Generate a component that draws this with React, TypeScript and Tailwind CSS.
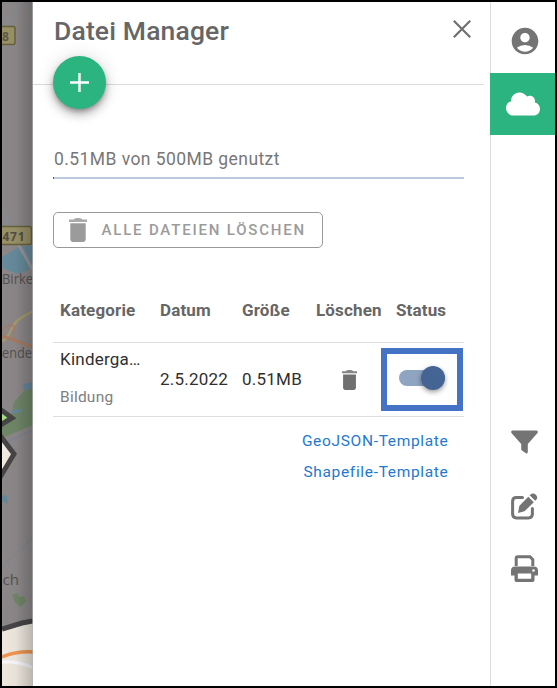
import React from "react";
import { MdAccountCircle } from "react-icons/md";

function MapStrip() {
  return (
    <svg className="block h-[684px] w-[31px] shrink-0" viewBox="2 2 31 684" fontFamily="Open Sans, sans-serif">
      <defs>
        <linearGradient id="edge" x1="0" x2="1" y1="0" y2="0">
          <stop offset="0" stopColor="#000" stopOpacity="0" />
          <stop offset="0.45" stopColor="#000" stopOpacity="0.03" />
          <stop offset="1" stopColor="#000" stopOpacity="0.22" />
        </linearGradient>
      </defs>
      <rect x="2" y="2" width="31" height="684" fill="#8c8889" />
      <path d="M2 30L23 2M2 212L10 226" stroke="#858d94" strokeWidth="2" />
      <rect x="-6" y="26.500" width="21" height="18" rx="2" fill="#999166" stroke="#68623e" strokeWidth="1.500" />
      <text x="2" y="40.500" fontSize="12" fontWeight="700" fill="#5c5846">8</text>
      <path d="M2 257L19 247L26 256L29 270L17 274L2 268ZM22 246H33V267Z" fill="#668b9c" />
      <path d="M18 244L33 270" stroke="#96979e" strokeWidth="3" />
      <rect x="-6" y="226.500" width="37.500" height="18" rx="2" fill="#999166" stroke="#68623e" strokeWidth="1.500" />
      <text x="2.500" y="240.500" fontSize="12" fontWeight="700" fill="#514f45" textLength="22">471</text>
      <text x="2" y="284" fontSize="14" fill="#555152" textLength="31" lengthAdjust="spacingAndGlyphs">Birke</text>
      <path d="M2 341C11 337 9 329 16 322C22 316 29 314 33 311" stroke="#a59a6d" strokeWidth="2.500" fill="none" />
      <path d="M2 331C8 322 17 324 14 331C12 340 17 340 17 343" stroke="#a47d68" strokeWidth="1.500" fill="none" />
      <path d="M2 336L33 347" stroke="#a77b62" strokeWidth="3" />
      <text x="2" y="358" fontSize="14" fill="#555152" textLength="30" lengthAdjust="spacingAndGlyphs">ende</text>
      <path d="M33 388L24 391L14 402L12 412L2 422V438L33 425Z" fill="#6f8767" />
      <path d="M23 384L32 382V389L24 390ZM12 411L22 408L22 412L12 414Z" fill="#66889b" />
      <path d="M2 444L33 430" stroke="#7c8590" strokeWidth="1.500" />
      <path d="M-8 403L12 418L-8 430Z" fill="#a3df80" stroke="#474545" strokeWidth="5" />
      <path d="M-5 429L14 454L-4 484Z" fill="#f0eae0" stroke="#474545" strokeWidth="5" />
      <path d="M2 495L7 496L8 504L2 501Z" fill="#66889b" />
      <path d="M2 567L33 537" stroke="#7d858c" strokeWidth="1" />
      <text x="2.500" y="584.500" fontSize="14" fill="#555152" textLength="16.500" lengthAdjust="spacingAndGlyphs">ch</text>
      <path d="M12 595L17 593L20 597L24 596L26 602L20 607L15 602Z" fill="#6f8767" />
      <path d="M2 630L22 624L33 622V686H2Z" fill="#eee8df" />
      <path d="M2 629L22 623L33 621" stroke="#474545" strokeWidth="5" fill="none" />
      <path d="M2 662Q20 661 33 668" stroke="#f8f7fa" strokeWidth="3" fill="none" />
      <path d="M2 657Q17 651 33 652" stroke="#f19550" strokeWidth="3.500" fill="none" />
      <rect x="2" y="2" width="31" height="684" fill="url(#edge)" />
      <path d="M32.500 2V686" stroke="#b5b5b5" strokeOpacity="0.65" />
    </svg>
  );
}

function Trash({ className }: { className: string }) {
  return (
    <svg className={className} viewBox="5 3 14 18" preserveAspectRatio="none" fill="currentColor">
      <path d="M6 19c0 1.100.9 2 2 2h8c1.100 0 2-.9 2-2V7H6z" />
      <path d="M5 6V4.200H8.500C9.500 3 10.500 3 12 3S14.500 3 15.500 4.200H19V6Z" opacity="0.85" />
    </svg>
  );
}

function FilterIcon() {
  return (
    <svg className="mt-[1px] h-[24px] w-[27px]" viewBox="0 0 27 24" fill="currentColor">
      <path d="M1.800 .5H25.200C26.800 .5 27.300 2 26.300 3.300L16.800 14V22C16.800 23.400 15.600 23.900 14.500 23.100L11 20.600C10.400 20.100 10.200 19.700 10.200 19V14L.7 3.300C-.3 2 .2 .5 1.800 .5Z" />
    </svg>
  );
}

function EditIcon() {
  return (
    <svg className="mt-[39px] h-[27px] w-[27px]" viewBox="0 0 27 27" fill="none">
      <path d="M11.500 4.500H5.500C3 4.500 1.600 5.900 1.600 8.400V21C1.600 23.500 3 24.900 5.500 24.900H17.500C20 24.900 21.400 23.500 21.400 21V15.500" stroke="currentColor" strokeWidth="3" strokeLinecap="round" />
      <path d="M17.300 3.700L22.800 9.200L13.500 18.300L7 20L8.400 12.800ZM18.700 2.300L19.800 1.200C22.800-1.500 28.300 3.500 25.500 6.500L24.200 7.800Z" fill="currentColor" />
    </svg>
  );
}

function PrintIcon() {
  return (
    <svg className="mt-[35px] h-[27px] w-[27px]" viewBox="0 0 27 27">
      <path d="M5.200 11V3.200Q5.200 1.700 6.700 1.700H19L21.800 4.500V11" fill="none" stroke="currentColor" strokeWidth="3" />
      <path d="M4 11.500H23C25.500 11.500 27 13 27 15.500V20.500H23.500V25C23.500 26.300 22.700 27 21.500 27H5.500C4.300 27 3.500 26.300 3.500 25V20.500H0V15.500C0 13 1.500 11.500 4 11.500ZM6.800 18.500V23.800H20.200V18.500Z" fill="currentColor" fillRule="evenodd" />
      <circle cx="22.500" cy="15.500" r="1.300" fill="white" />
    </svg>
  );
}

function CloudIcon() {
  return (
    <svg className="h-[24px] w-[34px]" viewBox="0 0 34 24" fill="currentColor">
      <path d="M7.500 23.500C3.300 23.500 0 20.200 0 16.200C0 12.800 2.100 10.100 5 9.200C5 4.200 8.600 .4 13.500 .4C16.700 .4 19.500 2 21 4.600C24.700 2.500 29 5 29 8.800L28.800 10.500C31.900 11.200 34 13.700 34 16.900C34 20.500 31.200 23.500 27.500 23.500Z" />
    </svg>
  );
}

const columns = "grid grid-cols-[100px_82px_74px_80px_67px] pl-[7px]";

export default function App() {
  return (
    <div className="flex h-[688px] w-[557px] overflow-hidden border-2 border-black bg-white font-['Roboto',sans-serif] text-[#666]">
      <MapStrip />
      <main className="h-[684px] w-[457px] shrink-0">
        <header className="relative mr-[6px] flex h-[82.500px] justify-between border-b border-[#dcdcdc] pl-[21px]">
          <h1 className="mt-[11px] h-9 text-[26.500px] leading-9 font-medium tracking-[0.150px] whitespace-nowrap">Datei Manager</h1>
          <button aria-label="Schließen" className="mt-[18px] mr-[13px] h-[18px] w-[18px]">
            <svg viewBox="0 0 18 18" fill="none" stroke="#707070" strokeWidth="2.200"><path d="M.8 .8L17.200 17.200M17.200 .8L.8 17.200" /></svg>
          </button>
          <button aria-label="Hinzufügen" className="absolute top-[54px] left-[20px] flex h-[53px] w-[53px] items-center justify-center rounded-full bg-[#2bb380] shadow-[0_3px_5px_-1px_rgba(0,0,0,0.3),0_6px_10px_rgba(0,0,0,0.2),0_1px_18px_rgba(0,0,0,0.15)]">
            <svg className="h-[19px] w-[19px]" viewBox="0 0 19 19" stroke="white" strokeWidth="2.400"><path d="M9.500 0V19M0 9.500H19" /></svg>
          </button>
        </header>
        <section className="pt-[62.500px] pr-[26px] pl-[20px]">
          <p className="h-6 pl-px text-[17.500px] leading-6 tracking-[0.430px] text-[#777]">0.51MB von 500MB genutzt</p>
          <div className="mt-[6px] h-[2px] bg-[#bdc9de]"><div className="h-full w-px bg-[#416391]" /></div>
          <button className="mt-[33px] flex h-[36px] w-[270px] items-center rounded-[5px] border border-[#999] pl-[15px] text-[#9b9b9b]">
            <Trash className="h-[24px] w-[18px]" />
            <span className="ml-[14.500px] text-[15px] font-medium tracking-[1.810px] whitespace-nowrap">ALLE DATEIEN LÖSCHEN</span>
          </button>
          <div className="mt-[31px]">
            <div className={`${columns} h-[64px] items-center border-b border-[#dedede] text-[17px] font-bold tracking-[0.150px] whitespace-nowrap`}>
              <span>Kategorie</span><span>Datum</span><span>Größe</span><span>Löschen</span><span>Status</span>
            </div>
            <div className={`${columns} h-[74px] items-center border-b border-[#dedede] text-[17px] tracking-[0.230px] text-[#303030]`}>
              <div className="flex h-full flex-col pt-[4px]">
                <span className="h-6 leading-6">Kinderga…</span>
                <span className="mt-[14px] h-6 text-[15.500px] leading-6 text-[#808080]">Bildung</span>
              </div>
              <span>2.5.2022</span><span>0.51MB</span>
              <Trash className="ml-[26px] h-[20px] w-[15px] text-[#707070]" />
              <div className="-ml-[15px] flex h-[63px] w-[82px] items-center justify-center border-[6px] border-[#4472c4]">
                <div className="flex h-[16px] w-[46px] -translate-y-[2px] items-center justify-end rounded-full bg-[#8ea4c1]">
                  <div className="h-[24px] w-[24px] shrink-0 rounded-full bg-[#446594] shadow-[0_2px_5px_rgba(0,0,0,0.4)]" />
                </div>
              </div>
            </div>
          </div>
          <nav className="flex flex-col items-end pt-[9px] pr-[15.500px] text-[15.500px] leading-[31px] tracking-[0.670px] text-[#2379d0]">
            <a>GeoJSON-Template</a><a>Shapefile-Template</a>
          </nav>
        </section>
      </main>
      <aside className="flex h-[684px] w-[65px] shrink-0 flex-col border-l border-[#ddd] text-[#747474]">
        <div className="flex h-[71px] items-center justify-center pt-[7px] pl-[3px]"><MdAccountCircle size={32} /></div>
        <div className="-ml-px flex h-[62px] items-center justify-center bg-[#2bb380] text-white"><CloudIcon /></div>
        <div className="mt-[294px] flex flex-col items-center pl-[3px]">
          <FilterIcon />
          <EditIcon />
          <PrintIcon />
        </div>
      </aside>
    </div>
  );
}
